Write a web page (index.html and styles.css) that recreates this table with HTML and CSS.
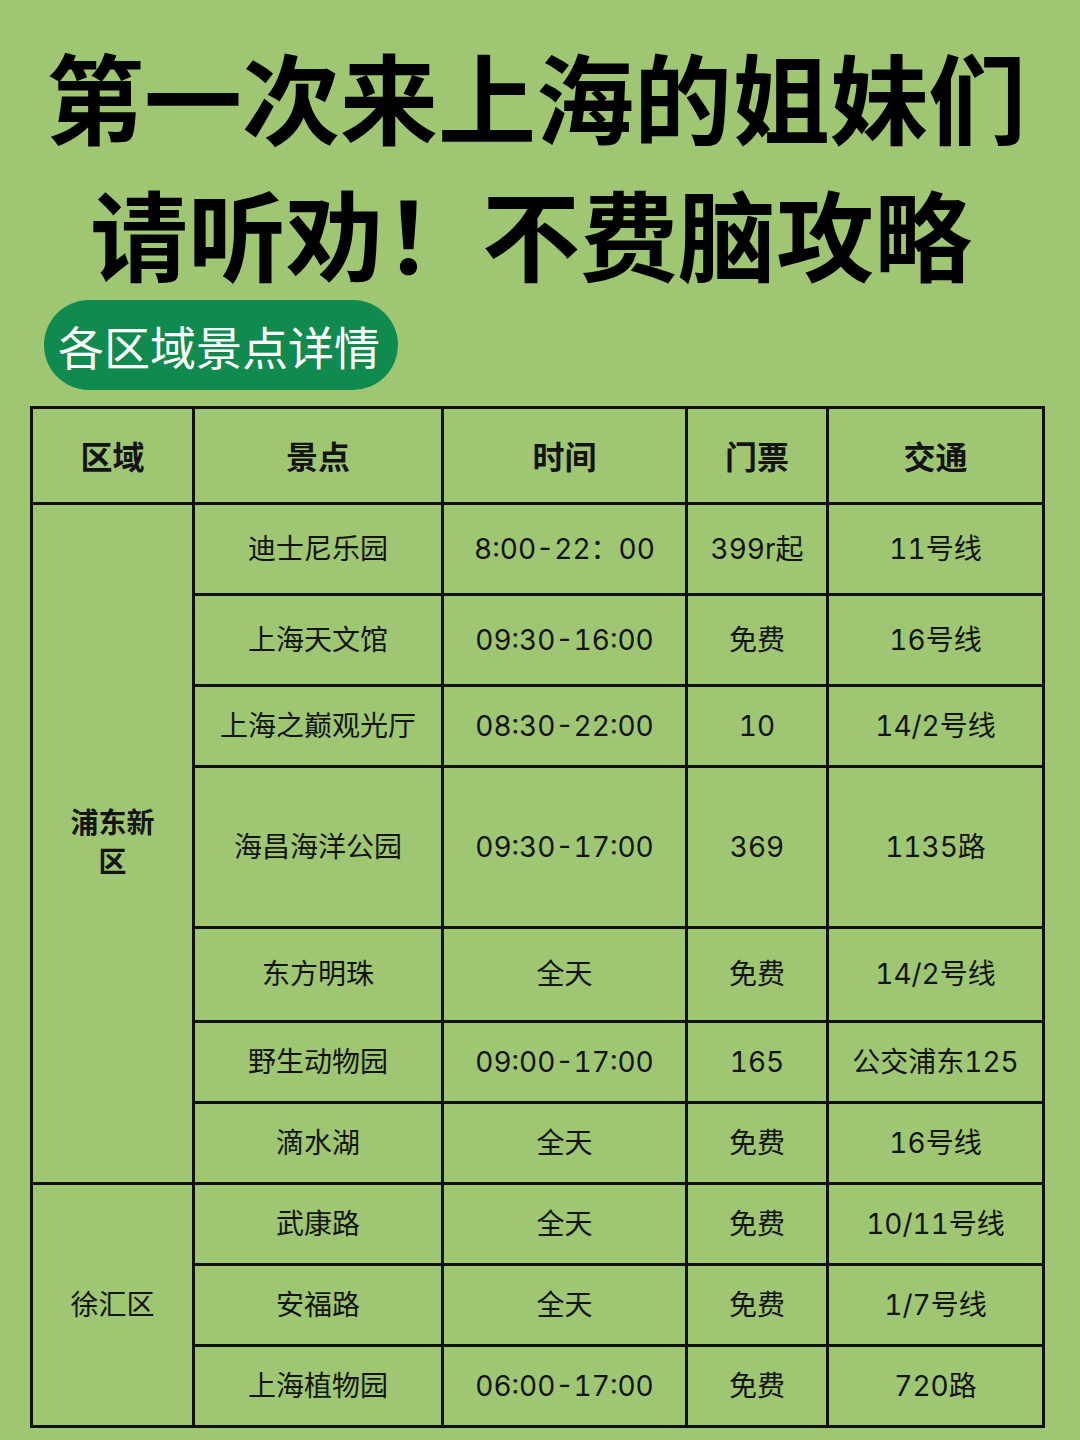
FILE: index.html
```html
<!DOCTYPE html>
<html lang="zh-CN">
<head>
<meta charset="utf-8">
<title>第一次来上海的姐妹们请听劝！不费脑攻略</title>
<link rel="stylesheet" href="styles.css">
</head>
<body>
<div class="page">
  <h1 class="title">
    <span class="line line1">第一次来上海的姐妹们</span>
    <span class="line line2">请听劝！不费脑攻略</span>
  </h1>
  <div class="pill">各区域景点详情</div>
  <div class="grid">
    <div class="cell head">区域</div>
    <div class="cell head">景点</div>
    <div class="cell head">时间</div>
    <div class="cell head">门票</div>
    <div class="cell head">交通</div>

    <div class="cell region bold pudong">浦东新<br>区</div>
    <div class="cell">迪士尼乐园</div>
    <div class="cell">8:00-22：00</div>
    <div class="cell">399r起</div>
    <div class="cell">11号线</div>

    <div class="cell">上海天文馆</div>
    <div class="cell">09:30-16:00</div>
    <div class="cell">免费</div>
    <div class="cell">16号线</div>

    <div class="cell">上海之巅观光厅</div>
    <div class="cell">08:30-22:00</div>
    <div class="cell">10</div>
    <div class="cell">14/2号线</div>

    <div class="cell">海昌海洋公园</div>
    <div class="cell">09:30-17:00</div>
    <div class="cell">369</div>
    <div class="cell">1135路</div>

    <div class="cell">东方明珠</div>
    <div class="cell">全天</div>
    <div class="cell">免费</div>
    <div class="cell">14/2号线</div>

    <div class="cell">野生动物园</div>
    <div class="cell">09:00-17:00</div>
    <div class="cell">165</div>
    <div class="cell">公交浦东125</div>

    <div class="cell">滴水湖</div>
    <div class="cell">全天</div>
    <div class="cell">免费</div>
    <div class="cell">16号线</div>

    <div class="cell region xuhui">徐汇区</div>
    <div class="cell">武康路</div>
    <div class="cell">全天</div>
    <div class="cell">免费</div>
    <div class="cell">10/11号线</div>

    <div class="cell">安福路</div>
    <div class="cell">全天</div>
    <div class="cell">免费</div>
    <div class="cell">1/7号线</div>

    <div class="cell">上海植物园</div>
    <div class="cell">06:00-17:00</div>
    <div class="cell">免费</div>
    <div class="cell">720路</div>
  </div>
</div>
</body>
</html>
```
FILE: styles.css
```css
html, body {
  margin: 0;
  padding: 0;
  background: #9fc673;
}

.page {
  width: 1080px;
  height: 1440px;
  overflow: hidden;
  background: #9fc673;
  font-family: "Inter", "Noto Sans CJK SC", sans-serif;
  font-variant-numeric: tabular-nums;
  color: #141414;
}

.title {
  margin: 0;
  padding-top: 26px;
  font-family: "Noto Sans CJK SC", sans-serif;
  font-weight: 700;
  font-size: 98px;
  color: #000;
  text-align: center;
}

.line {
  display: block;
  height: 137px;
  line-height: 137px;
  white-space: nowrap;
}

.line1 {
  padding-right: 8px;
}

.line2 {
  padding-right: 18px;
}

.pill {
  margin-left: 44px;
  width: 354px;
  height: 90px;
  box-sizing: border-box;
  padding-left: 14px;
  border-radius: 45px;
  background: #108a4e;
  color: #fff;
  font-family: "Noto Sans CJK SC", sans-serif;
  font-weight: 400;
  font-size: 46px;
  line-height: 90px;
  white-space: nowrap;
}

.grid {
  margin-top: 16px;
  margin-left: 30px;
  width: 1015px;
  box-sizing: border-box;
  padding: 3px;
  gap: 3px;
  background: #111;
  display: grid;
  grid-template-columns: 159px 246px 241px 138px 213px;
  grid-template-rows: 93px 88px 88px 78px 158px 91px 78px 78px 78px 78px 78px;
}

.cell {
  background: #9fc673;
  display: flex;
  align-items: center;
  justify-content: center;
  text-align: center;
  font-size: 28px;
  line-height: 39px;
  white-space: nowrap;
}

.head {
  font-family: "Noto Sans CJK SC", sans-serif;
  font-weight: 700;
  font-size: 32px;
}

.bold {
  font-weight: 700;
}

.pudong {
  grid-row: 2 / span 7;
  padding-bottom: 2px;
}

.xuhui {
  grid-row: 9 / span 3;
}
```
